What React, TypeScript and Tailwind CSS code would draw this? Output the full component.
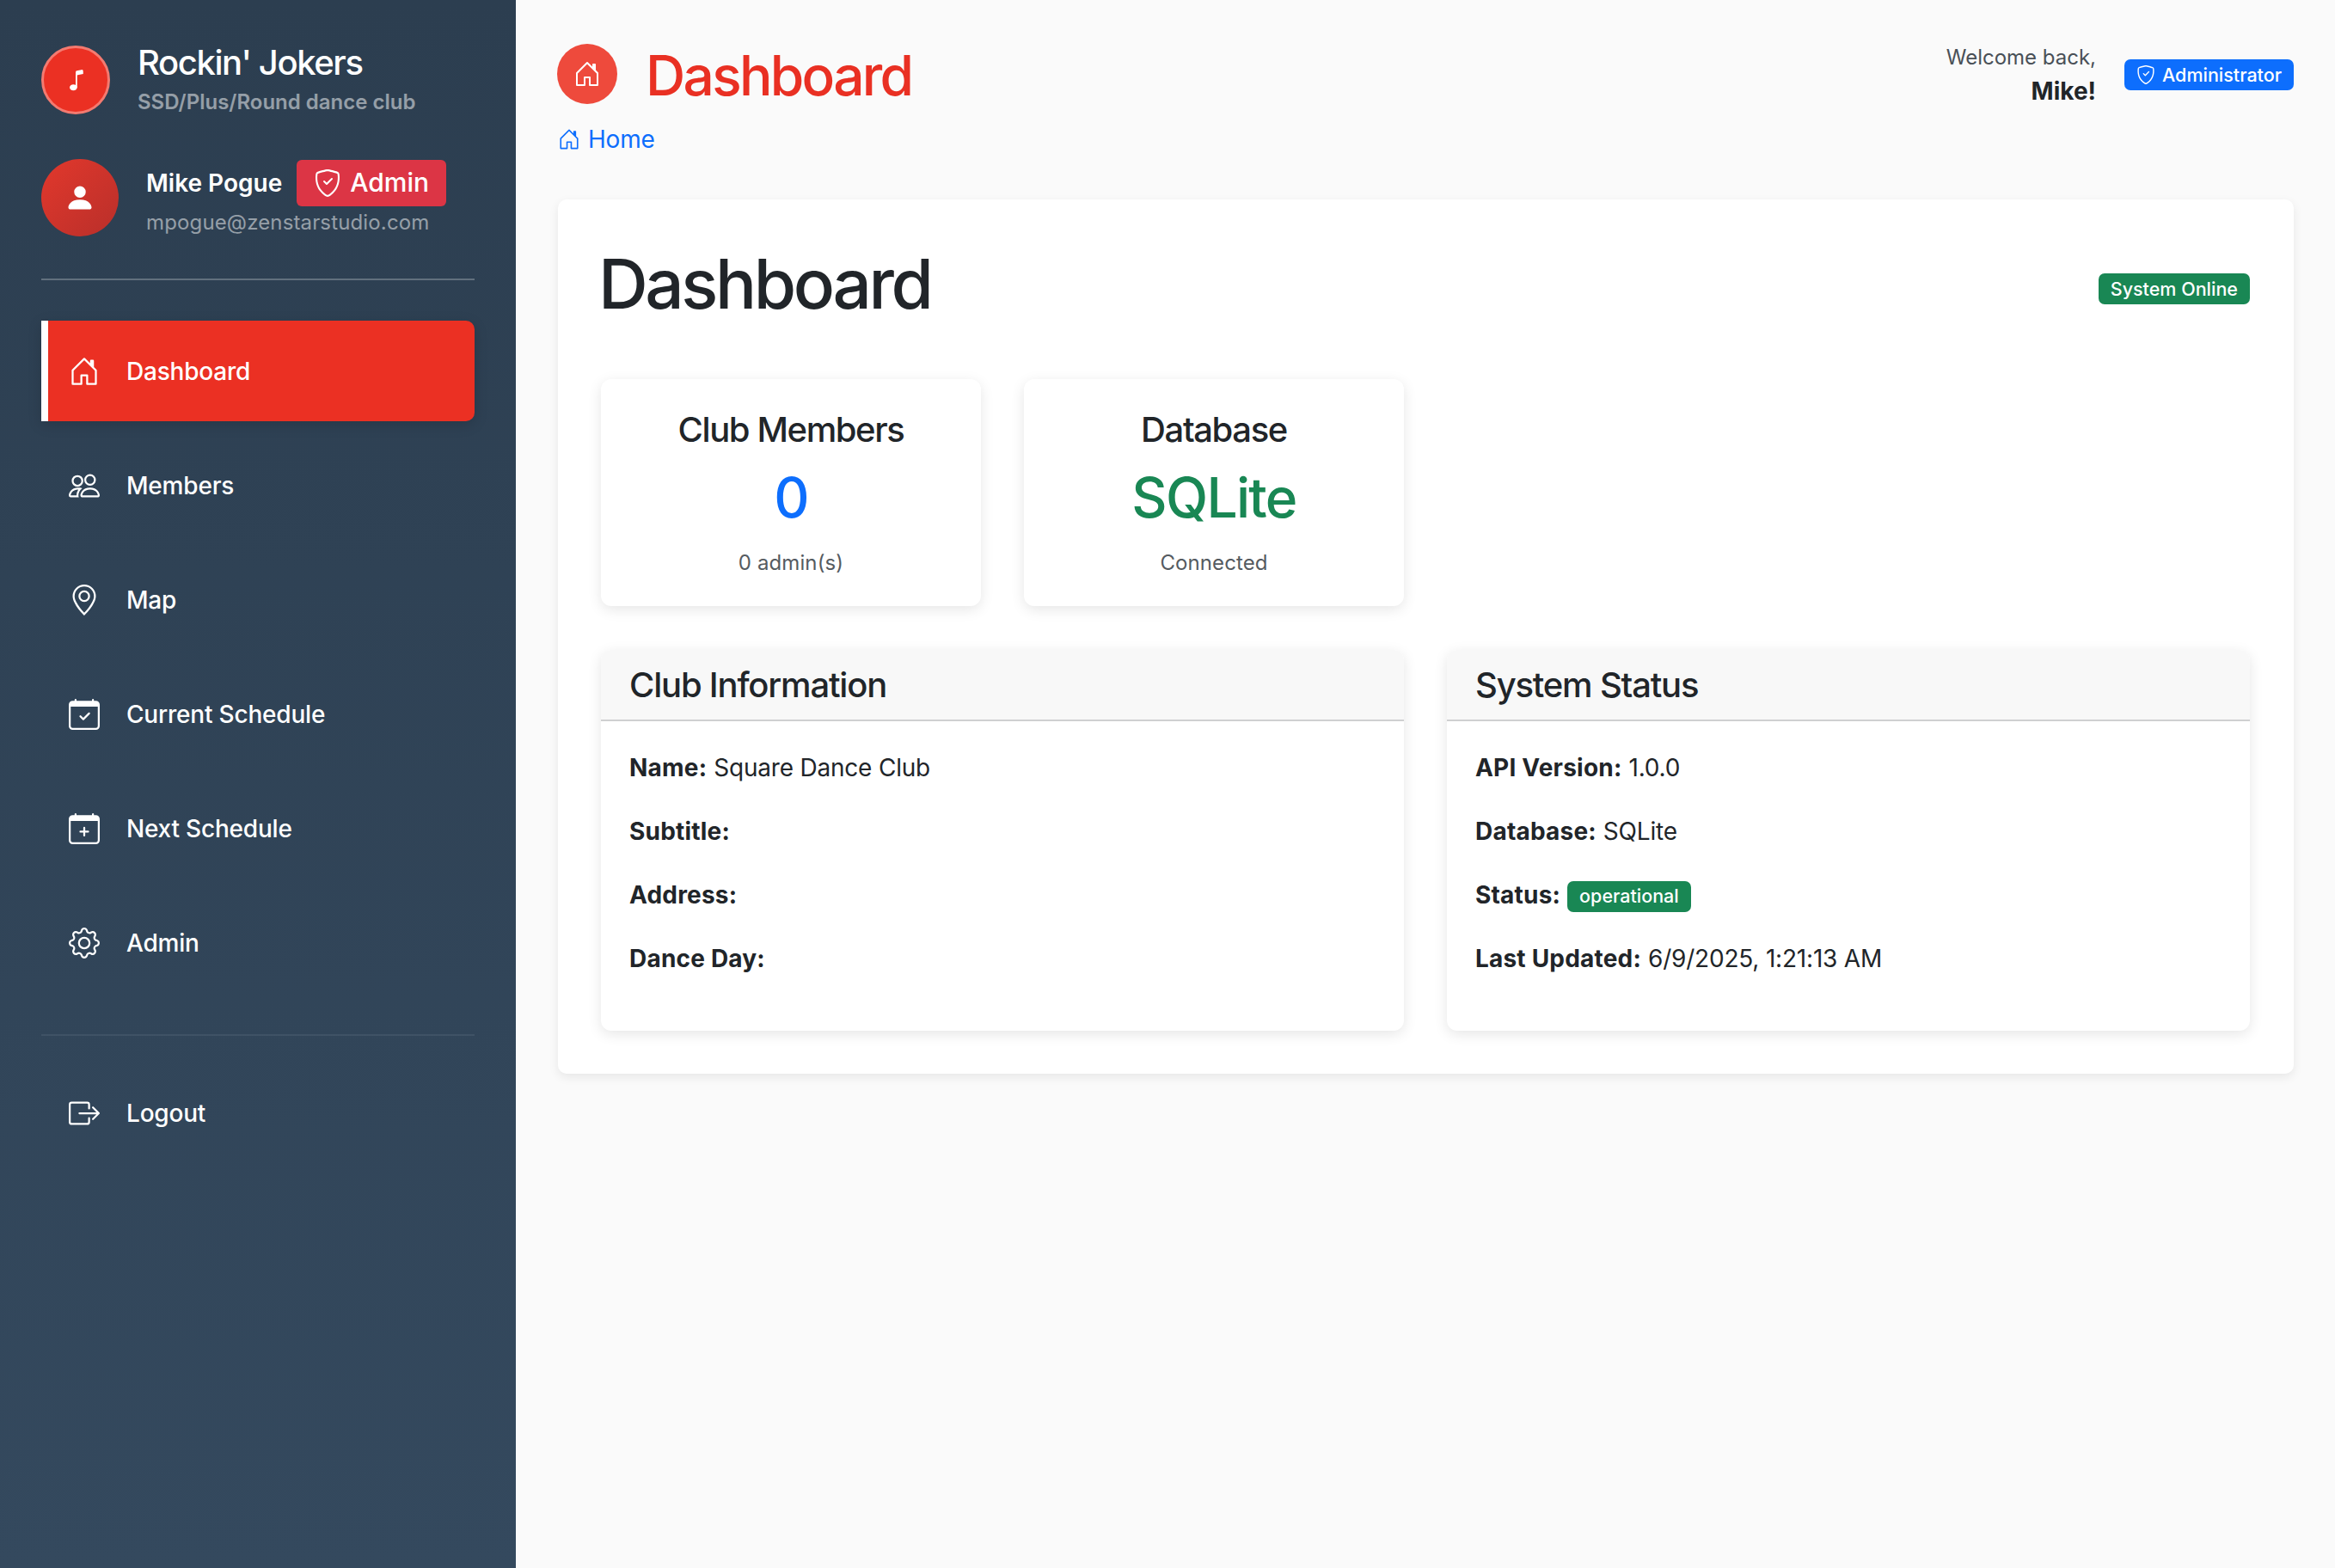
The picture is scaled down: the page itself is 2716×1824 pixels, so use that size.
import type { ReactNode } from 'react'
import type { IconType } from 'react-icons'
import {
    BsBoxArrowRight,
    BsCalendarCheck,
    BsCalendarPlus,
    BsGear,
    BsGeoAlt,
    BsHouseDoor,
    BsMusicNote,
    BsPeople,
    BsPersonFill,
    BsShieldCheck,
} from 'react-icons/bs'

const navItems: { icon: IconType; label: string; active?: boolean }[] = [
    { icon: BsHouseDoor, label: 'Dashboard', active: true },
    { icon: BsPeople, label: 'Members' },
    { icon: BsGeoAlt, label: 'Map' },
    { icon: BsCalendarCheck, label: 'Current Schedule' },
    { icon: BsCalendarPlus, label: 'Next Schedule' },
    { icon: BsGear, label: 'Admin' },
]

function NavLink({ icon: Icon, label, active }: { icon: IconType; label: string; active?: boolean }) {
    return (
        <a
            className={
                active
                    ? 'flex h-[117px] items-center gap-[31px] rounded-r-[10px] border-l-[8px] border-white bg-[#eb3023] pl-[24px] text-[28px] font-medium tracking-[-0.2px] text-white shadow-[0_4px_16px_rgba(0,0,0,0.15)]'
                    : 'flex h-[117px] items-center gap-[31px] pl-[32px] text-[28px] font-medium tracking-[-0.2px] text-white'
            }
        >
            <Icon className="h-[36px] w-[36px]" />
            <span>{label}</span>
        </a>
    )
}

function Sidebar() {
    return (
        <aside className="w-[600px] shrink-0 bg-gradient-to-b from-[#2c3e50] to-[#34495e] px-12 pt-[51px]">
            {/* Club brand */}
            <div className="flex items-center gap-8">
                <div className="flex h-[80px] w-[80px] items-center justify-center rounded-full border-[3px] border-[#f47a70] bg-[#eb3023] text-white">
                    <BsMusicNote className="h-[28px] w-[28px]" />
                </div>
                <div>
                    <div className="-mt-[2px] text-[40px] leading-[48px] font-medium tracking-[-1.4px] text-white">Rockin' Jokers</div>
                    <div className="mt-[6px] text-[24px] leading-[32px] font-semibold text-white/50">SSD/Plus/Round dance club</div>
                </div>
            </div>

            {/* Logged in user */}
            <div className="mt-[50px] flex items-center gap-8">
                <div className="flex h-[90px] w-[90px] shrink-0 items-center justify-center rounded-full bg-gradient-to-br from-[#e2382c] to-[#b92f2a] text-white">
                    <BsPersonFill className="h-[36px] w-[36px]" />
                </div>
                <div>
                    <div className="flex items-center gap-[17px]">
                        <span className="text-[28px] font-semibold text-white">Mike Pogue</span>
                        <span className="flex h-[54px] items-center gap-[10px] rounded-[6px] bg-[#dc3545] px-[20px] text-[30px] font-medium text-white">
                            <BsShieldCheck className="h-[32px] w-[32px]" />
                            Admin
                        </span>
                    </div>
                    <div className="mt-[3px] text-[24px] leading-[32px] tracking-[0.14px] text-white/50">mpogue@zenstarstudio.com</div>
                </div>
            </div>

            <div className="mt-[49px] h-[2px] bg-white/25" />

            <nav className="mt-[47px] flex flex-col gap-4">
                {navItems.map((item) => (
                    <NavLink key={item.label} icon={item.icon} label={item.label} active={item.active} />
                ))}
            </nav>

            <div className="mt-12 h-[2px] bg-white/[0.07]" />

            <div className="mt-[31px]">
                <NavLink icon={BsBoxArrowRight} label="Logout" />
            </div>
        </aside>
    )
}

function StatCard({ title, value, note, valueColor }: { title: string; value: string; note: string; valueColor: string }) {
    return (
        <div className="flex h-[264px] flex-col items-center rounded-[12px] bg-white pt-[35px] shadow-[0_4px_16px_rgba(0,0,0,0.1)]">
            <h3 className="text-[40px] leading-[48px] font-medium tracking-[-1.4px] text-[#212529]">{title}</h3>
            <div className={`mt-[17px] text-[64px] leading-[76px] font-medium tracking-[-1.7px] ${valueColor}`}>{value}</div>
            <div className="mt-[18px] text-[24px] leading-[40px] tracking-[0.1px] text-[#555b61]">{note}</div>
        </div>
    )
}

function InfoRow({ label, children }: { label: string; children?: ReactNode }) {
    return (
        <div className="flex h-[74px] items-center gap-[8px] text-[28px] tracking-[-0.2px] text-[#212529]">
            <strong className="font-bold tracking-[0.2px]">{label}</strong>
            {children}
        </div>
    )
}

function InfoCard({ title, children }: { title: string; children: ReactNode }) {
    return (
        <div className="h-[443px] overflow-hidden rounded-[12px] bg-white shadow-[0_4px_16px_rgba(0,0,0,0.1)]">
            <div className="flex h-[83px] items-center border-b-[2px] border-[#cfd0d1] bg-[#f8f8f8] px-[33px]">
                <h3 className="text-[40px] font-medium tracking-[-1.2px] text-[#212529]">{title}</h3>
            </div>
            <div className="px-[33px] pt-[17px]">{children}</div>
        </div>
    )
}

export default function App() {
    return (
        <div className="flex min-h-screen bg-[#fafafa] font-['Inter',sans-serif]">
            <Sidebar />

            <main className="flex-1 pt-[51px] pr-[48px] pl-[49px]">
                {/* Page header */}
                <header className="flex items-start justify-between">
                    <div>
                        <div className="flex items-center gap-[33px]">
                            <div className="-ml-[1px] flex h-[70px] w-[70px] items-center justify-center rounded-full bg-[#ee4a3c] text-white">
                                <BsHouseDoor className="h-[32px] w-[32px]" />
                            </div>
                            <h1 className="pt-[4px] text-[64px] leading-[66px] font-medium tracking-[-2.7px] text-[#e93023]">Dashboard</h1>
                        </div>
                        <div className="mt-[24px] flex items-center gap-[9px] text-[#0d6efd]">
                            <BsHouseDoor className="h-[26px] w-[26px]" />
                            <span className="text-[28px] leading-[34px] tracking-[-0.2px]">Home</span>
                        </div>
                    </div>
                    <div className="flex items-start gap-[33px]">
                        <div className="text-right">
                            <div className="text-[24px] leading-[32px] text-[#495057]">Welcome back,</div>
                            <div className="mt-[3px] text-[28px] leading-[40px] font-bold text-[#212529]">Mike!</div>
                        </div>
                        <span className="mt-[18px] flex h-[36px] items-center gap-[8px] rounded-[7px] bg-[#0d6efd] px-[14px] text-[21.5px] font-medium text-white">
                            <BsShieldCheck className="h-[22px] w-[22px]" />
                            Administrator
                        </span>
                    </div>
                </header>

                {/* Dashboard card */}
                <section className="mt-[53px] h-[1017px] rounded-[10px] bg-white pt-[50px] pr-[51px] pl-[50px] shadow-[0_4px_12px_rgba(0,0,0,0.08)]">
                    <div className="flex items-center justify-between">
                        <h2 className="-ml-[3px] text-[80px] leading-[96px] font-medium tracking-[-3.4px] text-[#212529]">Dashboard</h2>
                        <span className="mt-[12px] flex h-[36px] items-center rounded-[7px] bg-[#198754] px-[14px] text-[21.5px] font-medium text-white">
                            System Online
                        </span>
                    </div>

                    <div className="mt-[63px] grid grid-cols-4 gap-[50px]">
                        <StatCard title="Club Members" value="0" note="0 admin(s)" valueColor="text-[#0d6efd]" />
                        <StatCard title="Database" value="SQLite" note="Connected" valueColor="text-[#198754]" />
                    </div>

                    <div className="mt-[51px] grid grid-cols-2 gap-[50px]">
                        <InfoCard title="Club Information">
                            <InfoRow label="Name:">Square Dance Club</InfoRow>
                            <InfoRow label="Subtitle:" />
                            <InfoRow label="Address:" />
                            <InfoRow label="Dance Day:" />
                        </InfoCard>
                        <InfoCard title="System Status">
                            <InfoRow label="API Version:">1.0.0</InfoRow>
                            <InfoRow label="Database:">SQLite</InfoRow>
                            <InfoRow label="Status:">
                                <span className="mt-[3px] flex h-[36px] items-center rounded-[7px] bg-[#198754] px-[14px] text-[21.5px] font-medium tracking-normal text-white">
                                    operational
                                </span>
                            </InfoRow>
                            <InfoRow label="Last Updated:">6/9/2025, 1:21:13 AM</InfoRow>
                        </InfoCard>
                    </div>
                </section>
            </main>
        </div>
    )
}
